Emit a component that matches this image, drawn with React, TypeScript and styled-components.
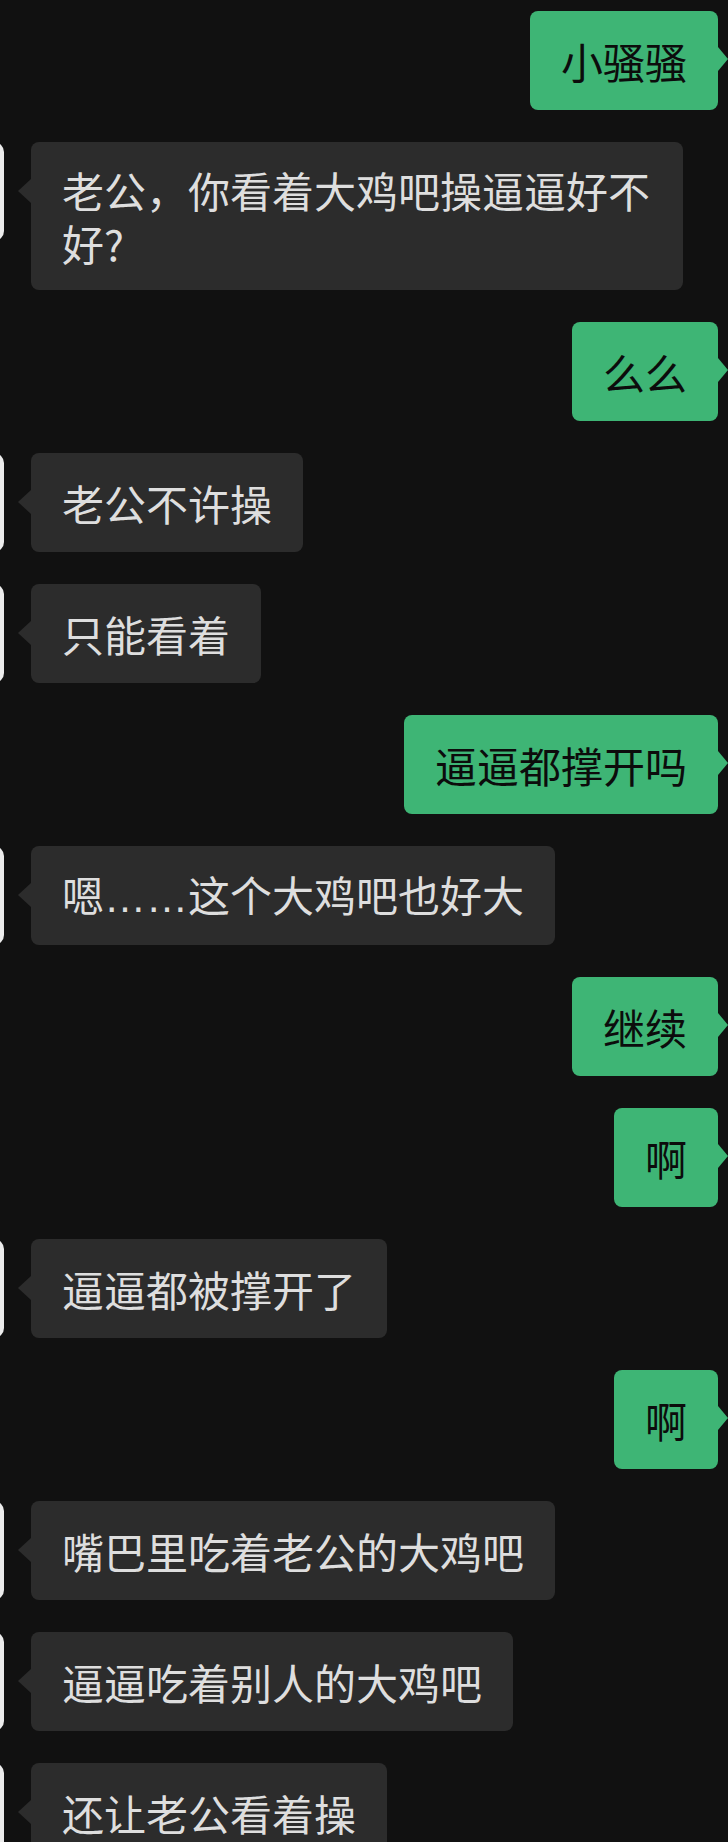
import React from "react";
import styled, { createGlobalStyle, css } from "styled-components";

const GlobalStyle = createGlobalStyle`
  html, body {
    margin: 0;
    padding: 0;
    background: #111111;
    overflow: hidden;
  }
  * { box-sizing: border-box; }
`;

type Side = "left" | "right";

interface Message {
  side: Side;
  text: string;
}

const messages: Message[] = [
  { side: "right", text: "小骚骚" },
  { side: "left", text: "老公，你看着大鸡吧操逼逼好不好?" },
  { side: "right", text: "么么" },
  { side: "left", text: "老公不许操" },
  { side: "left", text: "只能看着" },
  { side: "right", text: "逼逼都撑开吗" },
  { side: "left", text: "嗯……这个大鸡吧也好大" },
  { side: "right", text: "继续" },
  { side: "right", text: "啊" },
  { side: "left", text: "逼逼都被撑开了" },
  { side: "right", text: "啊" },
  { side: "left", text: "嘴巴里吃着老公的大鸡吧" },
  { side: "left", text: "逼逼吃着别人的大鸡吧" },
  { side: "left", text: "还让老公看着操" },
];

const Screen = styled.main`
  width: 728px;
  height: 1842px;
  background: #111111;
  padding-top: 11px;
  display: flex;
  flex-direction: column;
  gap: 32px;
  font-family: "Noto Sans CJK SC", "Noto Sans", sans-serif;
`;

const Row = styled.div<{ $side: Side }>`
  display: flex;
  align-items: flex-start;
  gap: 27px;
  justify-content: ${(p) => (p.$side === "left" ? "flex-start" : "flex-end")};
  padding-right: ${(p) => (p.$side === "right" ? "10px" : "0")};
`;

const Avatar = styled.div`
  flex: 0 0 auto;
  width: 99px;
  height: 99px;
  margin-left: -95px;
  border-radius: 10px;
  background: #ececec;
`;

const Bubble = styled.div<{ $side: Side }>`
  position: relative;
  min-height: 99px;
  max-width: 652px;
  padding: 21px 31px;
  display: flex;
  flex-direction: column;
  justify-content: center;
  border-radius: 8px;
  font-size: 42px;
  line-height: 53px;
  word-break: break-all;
  ${(p) =>
    p.$side === "left"
      ? css`
          background: #2c2c2c;
          color: #dedede;
          &::before {
            content: "";
            position: absolute;
            left: -13px;
            top: 37px;
            border-top: 12px solid transparent;
            border-bottom: 12px solid transparent;
            border-right: 13px solid #2c2c2c;
          }
        `
      : css`
          background: #3eb575;
          color: #0c0c0c;
          &::after {
            content: "";
            position: absolute;
            right: -10px;
            top: 36px;
            border-top: 12px solid transparent;
            border-bottom: 12px solid transparent;
            border-left: 10px solid #3eb575;
          }
        `}
`;

const Ellipsis = styled.span`
  font-family: "Liberation Sans", Arial, sans-serif;
`;

function renderText(text: string) {
  const parts = text.split("……");
  if (parts.length === 1) return text;
  return (
    <span>
      {parts.map((p, i) => (
        <React.Fragment key={i}>
          {i > 0 && <Ellipsis>……</Ellipsis>}
          {p}
        </React.Fragment>
      ))}
    </span>
  );
}

export default function App() {
  return (
    <>
      <GlobalStyle />
      <Screen>
        {messages.map((m, i) => (
          <Row key={i} $side={m.side}>
            {m.side === "left" && <Avatar />}
            <Bubble $side={m.side}>{renderText(m.text)}</Bubble>
          </Row>
        ))}
      </Screen>
    </>
  );
}
